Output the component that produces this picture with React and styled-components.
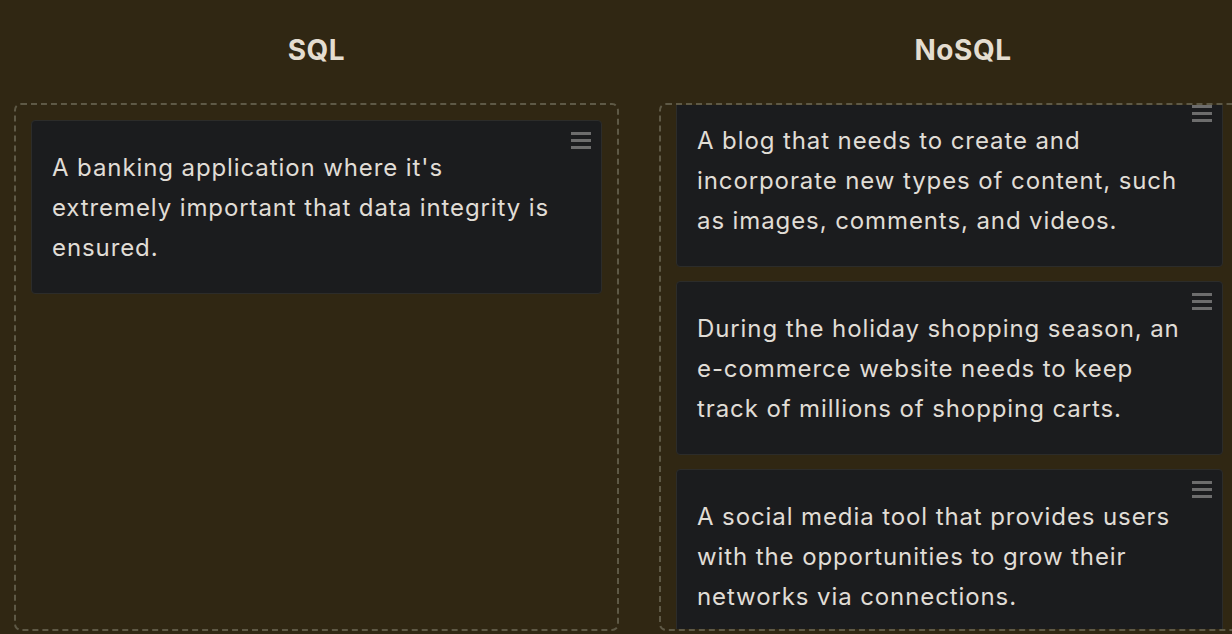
import React, { useEffect, useRef } from 'react'
import styled, { createGlobalStyle } from 'styled-components'

const GlobalStyle = createGlobalStyle`
    *{
        margin: 0;
        padding: 0;
        box-sizing: border-box;
    }
    html, body{
        background-color: #302713;
        overflow: hidden;
        font-family: Inter, "Noto Sans", sans-serif;
        color: #e2ded6;
    }
`

const Board = styled.div`
    display: grid;
    grid-template-columns: 605px 608px;
    column-gap: 40px;
    padding: 0 0 0 14px;
    width: 1300px;
`

const Column = styled.section`
    display: flex;
    flex-direction: column;
`

const Heading = styled.h2`
    height: 103px;
    display: flex;
    align-items: center;
    justify-content: center;
    font-size: 28px;
    font-weight: 700;
    letter-spacing: 0.5px;
    color: #e4ddd0;
    padding-bottom: 3px;
`

const DropZone = styled.div`
    height: 528px;
    border: 2px dashed #5e5946;
    border-radius: 7px;
    padding: 15px ${p => p.$padRight}px 16px 15px;
    display: flex;
    flex-direction: column;
    gap: 14px;
    overflow: hidden;
`

const Card = styled.div`
    position: relative;
    flex-shrink: 0;
    background-color: #1b1c1e;
    border: 1px solid #2c2c2a;
    border-radius: 4px;
    padding: 27px 32px 25px 20px;
    font-size: 24px;
    letter-spacing: 0.9px;
    line-height: 40px;
    color: #e0ddd6;
`

const Handle = styled.div`
    position: absolute;
    top: 11px;
    right: 10px;
    width: 20px;
    display: flex;
    flex-direction: column;
    gap: 4px;

    span{
        display: block;
        height: 3px;
        background-color: #6d6d6d;
    }
`

const sql = [
    "A banking application where it's extremely important that data integrity is ensured."
]

const nosql = [
    "A blog that needs to create and incorporate new types of content, such as images, comments, and videos.",
    "During the holiday shopping season, an e-commerce website needs to keep track of millions of shopping carts.",
    "A social media tool that provides users with the opportunities to grow their networks via connections."
]

function Item({ text }){
    return(
        <Card>
            <Handle><span /><span /><span /></Handle>
            {text}
        </Card>
    )
}

export default function App(){
    const scroller = useRef(null)

    useEffect(() => {
        if (scroller.current) scroller.current.scrollTop = 27
    }, [])

    return(
        <Board>
            <GlobalStyle />
            <Column>
                <Heading>SQL</Heading>
                <DropZone $padRight={15}>
                    {sql.map(t => <Item key={t} text={t} />)}
                </DropZone>
            </Column>
            <Column>
                <Heading>NoSQL</Heading>
                <DropZone ref={scroller} $padRight={42}>
                    {nosql.map(t => <Item key={t} text={t} />)}
                </DropZone>
            </Column>
        </Board>
    )
}
